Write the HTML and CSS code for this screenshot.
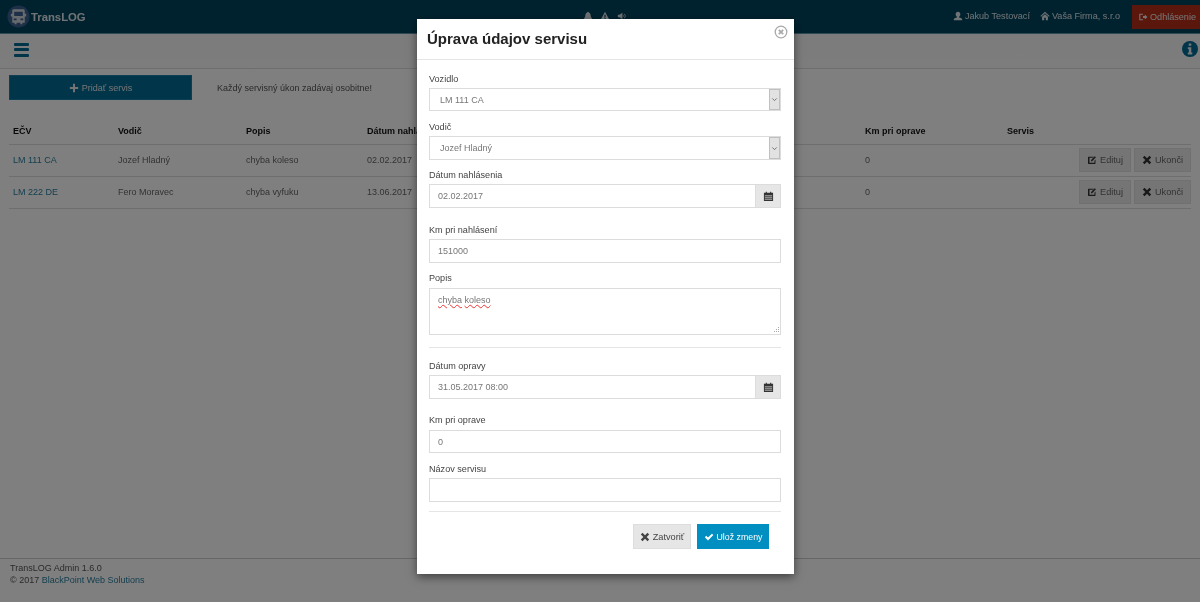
FILE: index.html
```html
<!DOCTYPE html>
<html lang="sk">
<head>
<meta charset="utf-8">
<title>TransLOG</title>
<link rel="stylesheet" href="styles.css">
</head>
<body>
<svg class="defs" width="0" height="0" aria-hidden="true">
  <symbol id="i-x" viewBox="0 0 12 12"><path d="M1 3l2-2 3 3 3-3 2 2-3 3 3 3-2 2-3-3-3 3-2-2 3-3z"/></symbol>
  <symbol id="i-edit" viewBox="0 0 12 12"><path d="M2 2h6L7 3.200H3v6h6V6.600l1.200-1.200V10a.8.8 0 0 1-.8.8H2a.8.8 0 0 1-.8-.8V2.800A.8.8 0 0 1 2 2z"/><path d="M5 6l4.200-4.600 1.500 1.400L6.500 7.300 4.700 7.700z"/></symbol>
  <symbol id="i-cal" viewBox="0 0 12 12"><path d="M3 .8h1.200V2h3.600V.8H9V2h2v9H1V2h2z"/><path fill="#e6e6e6" d="M2 4.300h8v.7H2zM2 6.400h8v.7H2zM2 8.500h8v.7H2z"/></symbol>
</svg>
<div class="page">
  <header class="topbar">
    <a class="brand">
      <svg class="logo" viewBox="0 0 24 24"><circle cx="12" cy="12" r="11.500" fill="#3a6090"/><path fill="#cfd6dc" d="M7 4.500h10a1.500 1.500 0 0 1 1.500 1.500v3h1.500v3h-1.500v6.500h-2.500V20h-2v-1.500h-4V20H8v-1.500H5.500V12H4V9h1.500V6A1.500 1.500 0 0 1 7 4.500z"/><path fill="#3a6090" d="M7.500 7h9v4.500h-9zM7 14h3v2H7zM14 14h3v2h-3z"/></svg>
      <span>TransLOG</span>
    </a>
    <div class="alerts">
      <svg viewBox="0 0 12 12"><path d="M6 .8c.5 0 .9.400.9.900 1.700.5 2.100 2 2.300 3.800.1 1.500.6 2.500 1.500 3.300v.8H1.300v-.8c.9-.8 1.400-1.800 1.500-3.300.2-1.800.6-3.300 2.300-3.800 0-.5.400-.9.900-.9zM4.800 10.300h2.400C7.100 11 6.600 11.400 6 11.400s-1.100-.4-1.200-1.100z"/></svg>
      <svg viewBox="0 0 12 12"><path fill-rule="evenodd" d="M6 1l5.500 10H.5zM5.300 4.500v3.400h1.400V4.500zM5.300 8.500v1.300h1.400V8.500z"/></svg>
      <svg viewBox="0 0 12 12"><path d="M1 4.500h2L6.500 2v8L3 7.500H1zM7.500 4.500c1 .8 1 2.200 0 3zM9 3.300c1.800 1.500 1.800 3.900 0 5.400l-.5-.6c1.300-1.200 1.300-3 0-4.200z"/></svg>
    </div>
    <nav class="usernav">
      <span class="navitem"><svg viewBox="0 0 12 12"><path d="M6 .8c1.800 0 2.800 1.300 2.800 3 0 1.300-.6 2.500-1.500 3.100v.8c2 .5 3.700 1.100 3.700 2.300v1H1v-1c0-1.200 1.700-1.800 3.700-2.300v-.8C3.800 6.300 3.200 5.100 3.200 3.800c0-1.700 1-3 2.800-3z"/></svg>Jakub Testovací</span>
      <span class="navitem"><svg viewBox="0 0 12 12"><path d="M6 1l5.500 5-.8.800L6 2.600 1.300 6.800.5 6zM2.500 7L6 3.900 9.500 7v4H7V8H5v3H2.500z"/></svg>Vaša Firma, s.r.o</span>
      <span class="logout"><svg viewBox="0 0 12 12"><path d="M1.500 2H6v1.300H2.800v5.400H6V10H1.500z"/><path d="M6 4.700h2.200V2.900L11.300 6 8.200 9.100V7.300H6z"/></svg>Odhlásenie</span>
    </nav>
  </header>
  <div class="subbar">
    <div class="burger"><i></i><i></i><i></i></div>
    <svg class="info" viewBox="0 0 16 16"><circle cx="8" cy="8" r="8" fill="#006a94"/><path fill="#e8ecef" d="M6.700 2.500h2.600v2.300H6.700zM5.800 6.200h3.500v5.400h1v1.800H5.800v-1.800h1V8h-1z"/></svg>
  </div>
  <main class="content">
    <div class="actions">
      <a class="add"><svg viewBox="0 0 12 12"><path d="M4.800 1h2.400v3.800H11v2.400H7.200V11H4.800V7.200H1V4.800h3.800z"/></svg>Pridať servis</a>
      <span class="note">Každý servisný úkon zadávaj osobitne!</span>
    </div>
    <table class="list">
      <colgroup><col class="c1"><col class="c2"><col class="c3"><col class="c4"><col class="c5"><col class="c6"><col class="c7"><col class="c8"></colgroup>
      <thead>
        <tr><th>EČV</th><th>Vodič</th><th>Popis</th><th>Dátum nahlásenia</th><th>Km pri nahlásení</th><th>Km pri oprave</th><th>Servis</th><th></th></tr>
      </thead>
      <tbody>
        <tr><td><a>LM 111 CA</a></td><td>Jozef Hladný</td><td>chyba koleso</td><td>02.02.2017</td><td>151000</td><td>0</td><td></td>
          <td class="rowbtns"><span class="mini"><svg><use href="#i-edit"/></svg>Edituj</span><span class="mini"><svg><use href="#i-x"/></svg>Ukonči</span></td></tr>
        <tr><td><a>LM 222 DE</a></td><td>Fero Moravec</td><td>chyba vyfuku</td><td>13.06.2017</td><td>98000</td><td>0</td><td></td>
          <td class="rowbtns"><span class="mini"><svg><use href="#i-edit"/></svg>Edituj</span><span class="mini"><svg><use href="#i-x"/></svg>Ukonči</span></td></tr>
      </tbody>
    </table>
  </main>
  <footer class="foot">
    <div>TransLOG Admin 1.6.0</div>
    <div>© 2017 <a>BlackPoint Web Solutions</a></div>
  </footer>
</div>
<div class="backdrop"></div>
<section class="modal">
  <div class="mhead">
    <h2>Úprava údajov servisu</h2>
    <svg class="close" viewBox="0 0 14 14"><circle cx="7" cy="7" r="5.800" fill="none" stroke="#a9a9a9" stroke-width="1.300"/><path fill="none" stroke="#a9a9a9" stroke-width="1.800" d="M4.800 4.800l4.400 4.400M9.200 4.800L4.800 9.200"/></svg>
  </div>
  <form class="mbody">
    <label class="lab">Vozidlo</label>
    <div class="sel s1"><span class="val wide">LM 111 CA</span><span class="arrow"><svg viewBox="0 0 8 8"><path fill="none" stroke="#666" d="M1.500 2.800L4 5.300l2.500-2.500"/></svg></span></div>
    <label class="lab l2">Vodič</label>
    <div class="sel"><span class="val wide">Jozef Hladný</span><span class="arrow"><svg viewBox="0 0 8 8"><path fill="none" stroke="#666" d="M1.500 2.800L4 5.300l2.500-2.500"/></svg></span></div>
    <label class="lab l3">Dátum nahlásenia</label>
    <div class="group"><span class="val">02.02.2017</span><span class="addon"><svg><use href="#i-cal"/></svg></span></div>
    <label class="lab l4">Km pri nahlásení</label>
    <div class="inp"><span class="val">151000</span></div>
    <label class="lab l5">Popis</label>
    <div class="area"><span class="typo">chyba</span> <span class="typo">koleso</span><svg class="grip" viewBox="0 0 6 6"><path fill="#aaa" d="M5 0h1v1H5zM3 2h1v1H3zM5 2h1v1H5zM1 4h1v1H1zM3 4h1v1H3zM5 4h1v1H5z"/></svg></div>
    <hr class="rule r1">
    <label class="lab l6">Dátum opravy</label>
    <div class="group"><span class="val">31.05.2017 08:00</span><span class="addon"><svg><use href="#i-cal"/></svg></span></div>
    <label class="lab l7">Km pri oprave</label>
    <div class="inp s1"><span class="val">0</span></div>
    <label class="lab l8">Názov servisu</label>
    <div class="inp"></div>
    <hr class="rule r2">
    <div class="mfoot">
      <span class="btn close-btn"><svg><use href="#i-x"/></svg>Zatvoriť</span>
      <span class="btn save-btn"><svg viewBox="0 0 12 12"><path d="M1 6.300l1.700-1.700L4.800 6.700 9.500 2l1.700 1.700-6.400 6.400z"/></svg>Ulož zmeny</span>
    </div>
  </form>
</section>
</body>
</html>
```
FILE: styles.css
```css
* { box-sizing: border-box; }
html, body { margin: 0; height: 100%; }
body { font-family: "Liberation Sans", Arial, sans-serif; font-size: 9px; color: #333; background: #fff; overflow: hidden; filter: blur(.35px); }
.defs { position: absolute; }
svg { fill: currentColor; display: block; flex: none; }
.page { height: 602px; display: flex; flex-direction: column; background: #fff; }

.topbar { height: 34px; flex: none; background: #00455f; border-bottom: 1px solid #5f93aa; display: flex; align-items: flex-start; color: #e0e6ea; position: relative; }
.brand { display: flex; align-items: center; margin: 5px 0 0 7px; gap: 1px; font-weight: 700; font-size: 11.300px; color: #e0e6ea; }
.logo { width: 23px; height: 23px; }
.alerts { position: absolute; left: 583px; top: 11px; display: flex; gap: 7px; color: #e0e6ea; }
.alerts svg { width: 10px; height: 10px; }
.usernav { margin-left: auto; display: flex; align-items: flex-start; font-size: 9.100px; }
.navitem { display: flex; align-items: center; gap: 2px; margin: 10px 10px 0 0; height: 11px; color: #e0e6ea; }
.navitem svg { width: 10px; height: 10px; }
.navitem + .navitem { margin-right: 12px; }
.logout { display: flex; align-items: center; gap: 2px; width: 68px; height: 24px; margin-top: 5px; padding-left: 6px; background: #b82e18; color: #e8e8e8; white-space: nowrap; overflow: hidden; }
.logout svg { width: 10px; height: 10px; }

.subbar { height: 35px; flex: none; display: flex; justify-content: space-between; align-items: center; padding: 0 2px 0 14px; background: linear-gradient(#f8f8f8, #fafafa); border-bottom: 1px solid #ddd; }
.burger { width: 15px; display: flex; flex-direction: column; gap: 2.500px; margin-top: -3px; }
.burger i { display: block; height: 3px; background: #006a94; border-radius: 1px; }
.info { width: 16px; height: 16px; margin-top: -4px; }

.content { flex: 1; padding: 6px 9px 0; }
.actions { display: flex; align-items: center; height: 25px; }
.add { width: 183px; height: 25px; display: flex; align-items: center; justify-content: center; gap: 3px; background: #006a94; border: 1px solid #1b7fa8; color: #e8e8e8; }
.add svg { width: 10px; height: 10px; }
.note { margin-left: 25px; color: #555; }

.list { width: 100%; table-layout: fixed; border-collapse: collapse; margin-top: 20px; }
.c1 { width: 105px; } .c2 { width: 128px; } .c3 { width: 121px; } .c4 { width: 200px; }
.c5 { width: 298px; } .c6 { width: 142px; } .c7 { width: 60px; }
.list th { text-align: left; font-weight: 700; color: #111; height: 24px; padding: 0 4px 1px; border-bottom: 1px solid #ddd; white-space: nowrap; overflow: hidden; }
.list td { height: 32px; padding: 0 4px; border-bottom: 1px solid #ddd; color: #666; }
.list a { color: #2a7f9e; }
.list td.rowbtns { padding: 0; text-align: right; }
.mini { display: inline-flex; align-items: center; justify-content: center; gap: 3px; height: 24px; width: 52px; vertical-align: middle; background: #eaeaea; border: 1px solid #e0e0e0; color: #666; font-size: 9.200px; }
.mini + .mini { width: 57px; margin-left: 3px; }
.mini svg { width: 10px; height: 10px; color: #333; }

.foot { height: 44px; flex: none; border-top: 1px solid #ccc; padding: 3px 10px 0; line-height: 12px; color: #555; }
.foot a { color: #2a7f9e; }

.backdrop { position: fixed; inset: 0; background: rgba(0, 0, 0, .5); }
.modal { position: fixed; left: 417px; top: 19px; width: 377px; height: 555px; background: #fff; box-shadow: 0 3px 9px rgba(0, 0, 0, .5); }
.mhead { height: 41px; border-bottom: 1px solid #e5e5e5; position: relative; padding: 11px 0 0 10px; }
.mhead h2 { margin: 0; font-size: 15px; line-height: 18px; font-weight: 700; color: #222; }
.close { position: absolute; right: 6px; top: 6px; width: 14px; height: 14px; }
.mbody { padding: 13px 13px 0 12px; display: block; }
.lab { display: block; line-height: 12px; height: 12px; margin-bottom: 3px; color: #444; font-size: 9.100px; }
.l2 { margin-top: 10px; }
.l3 { margin-top: 9px; }
.l4 { margin-top: 16px; }
.l5 { margin-top: 9px; margin-bottom: 4px; }
.l6 { margin-top: 12px; }
.l7 { margin-top: 15px; margin-bottom: 4px; }
.l8 { margin-top: 10px; }
.sel, .group, .inp { height: 24px; border: 1px solid #dcdcdc; display: flex; align-items: center; color: #777; }
.s1 { height: 23px; }
.val { padding-left: 8px; flex: 1; }
.val.wide { padding-left: 10px; }
.arrow { width: 11px; height: 100%; background: #e2e2e2; border: 1px solid #c0c0c0; display: flex; align-items: center; justify-content: center; }
.arrow svg { width: 7px; height: 7px; }
.addon { width: 25px; height: 100%; background: #e6e6e6; border-left: 1px solid #ddd; display: flex; align-items: center; justify-content: center; color: #333; }
.addon svg { width: 11px; height: 11px; }
.area { height: 47px; border: 1px solid #dcdcdc; padding: 6px 8px; color: #777; line-height: 11px; position: relative; }
.grip { position: absolute; right: 1px; bottom: 1px; width: 6px; height: 6px; }
.typo { text-decoration: underline wavy #e33; text-decoration-thickness: .7px; text-underline-offset: 1px; }
.rule { border: 0; border-top: 1px solid #e5e5e5; margin: 0; }
.r1 { margin-top: 12px; }
.r2 { margin-top: 9px; }
.mfoot { display: flex; justify-content: flex-end; gap: 6px; margin-top: 12px; padding-right: 12px; }
.btn { display: flex; align-items: center; justify-content: center; gap: 3px; height: 25px; font-size: 9.200px; }
.btn svg { width: 10px; height: 10px; }
.close-btn { width: 58px; background: #e6e6e6; border: 1px solid #ddd; color: #444; }
.save-btn { width: 72px; background: #008fc0; color: #fff; font-size: 8.800px; }
```
